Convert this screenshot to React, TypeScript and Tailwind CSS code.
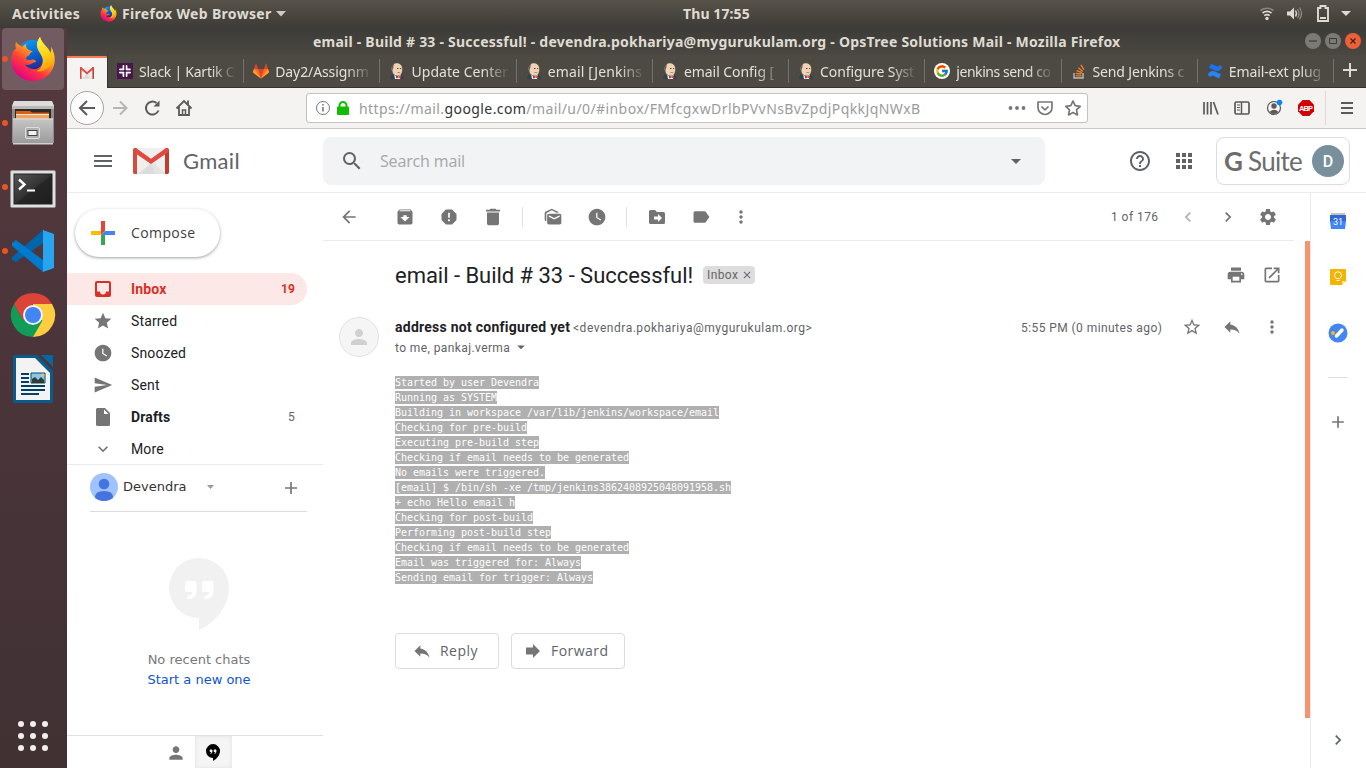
import React from "react";
import {
  MdArchive, MdReport, MdDelete, MdMarkAsUnread, MdWatchLater, MdLabel, MdMoreVert, MdSettings, MdPrint,
  MdOpenInNew, MdStarBorder, MdReply, MdHelpOutline, MdApps, MdMenu, MdSearch, MdArrowBack, MdChevronLeft,
  MdChevronRight, MdStar, MdSend, MdExpandMore, MdPerson, MdAdd, MdArrowDropDown, MdClose,
} from "react-icons/md";
import { FcGoogle } from "react-icons/fc";

const Firefox = ({ size, id }: { size: number; id: string }) => (
  <svg width={size} height={size} viewBox="0 0 44 46" className="shrink-0">
    <defs>
      <linearGradient id={id + "a"} x1="0.8" y1="0.1" x2="0.25" y2="0.95">
        <stop offset="0" stopColor="#ffe226" />
        <stop offset="0.35" stopColor="#ffa21a" />
        <stop offset="0.65" stopColor="#ff3b3b" />
        <stop offset="1" stopColor="#e50086" />
      </linearGradient>
      <linearGradient id={id + "b"} x1="0.3" y1="0" x2="0.6" y2="1">
        <stop offset="0" stopColor="#0a9bf5" />
        <stop offset="0.55" stopColor="#0a56c8" />
        <stop offset="1" stopColor="#2b1478" />
      </linearGradient>
      <linearGradient id={id + "c"} x1="0.3" y1="0" x2="0.5" y2="1">
        <stop offset="0" stopColor="#fff44f" />
        <stop offset="0.5" stopColor="#ffd317" />
        <stop offset="1" stopColor="#ff9a0d" />
      </linearGradient>
    </defs>
    <circle cx="22" cy="21" r="17" fill={`url(#${id}b)`} />
    <path d="M5 6c-1 3-.6 5 0 6.500C1 16 .300 20 .300 24c0 12 9.500 21 21.700 21s21.700-9.500 21.700-21.500c0-4-1-8-3-11 .3 3 0 4.500-.7 6C38 12 31 8 29 1c-3 4-4 9-1 14 3 4 5 7 3.500 12-1.500 4.500-5.500 6.500-9.500 6-4-.3-6.500-2-8-4.500 3 .8 5 .3 7-1 1.500-1 3-.8 4-1.400.2-1.700-1.500-3-4-2.600-2 .5-4 1.200-6-.5 0-2 1.500-3 3-3.500.8-1 .6-2.500 4-4.500-2 0-4-.4-6-2.500-.9-1.200-1.200-3-.6-4.700-1.400.5-3 1.500-4 3C9 9.500 6.500 8.500 5 6z" fill={`url(#${id}a)`} />
    <path d="M29 1c-3.500 4.500-4 9-1.500 13.500C30 19 33 22 31.500 28c-1 4-3.500 6-6 7.500 8 1 15-4.500 16.500-13 .6-5-.3-9-1.600-12 .2 3-.2 5-.9 6.500C37.500 10.500 30.500 8 29 1z" fill={`url(#${id}c)`} />
  </svg>
);

const GmailLogo = ({ w, h }: { w: number; h: number }) => (
  <svg width={w} height={h} viewBox="0 0 36 26" className="shrink-0" preserveAspectRatio="none">
    <path d="M3 0h30v26H3z" fill="#efefef" />
    <path d="M18 12L33 26H10z" fill="#e0e0e0" opacity=".7" />
    <path d="M4 26l14-10 4 10z" fill="#d9d9d9" opacity=".7" />
    <path d="M0 2.200C0 1 .9 0 2.200 0L4 .4V26H1.800C.8 26 0 25.200 0 24.200z" fill="#d54b3d" />
    <path d="M36 2.200C36 1 35.100 0 33.800 0L32 .4V26h2.200c1 0 1.800-.8 1.800-1.800z" fill="#c33a2e" />
    <path d="M.3 1.300C.6.400 1.300 0 2.200 0c.6 0 1 .1 1.500.5L18 10.800 32.300.5c.5-.4.9-.5 1.500-.5.900 0 1.600.4 1.900 1.300.5 1.500.1 2.600-.9 3.300L18 16 1.200 4.600C.2 3.900-.1 2.800.3 1.300z" fill="#e04b3f" />
  </svg>
);

const Jenkins = () => (
  <svg width="16" height="16" viewBox="0 0 16 16" className="shrink-0">
    <path d="M1 16c.3-3 1.500-5 4-5.500l6 .5c2.500.5 3.500 2.500 4 5z" fill="#2d4450" />
    <path d="M5 11l3 3 4-3-1 5H6z" fill="#f4f4f4" />
    <path d="M2.500 5.500c0-3.500 2.500-5.500 5.500-5.500s5.500 2.500 5.500 6c0 4-1.500 7-4.700 7S3.500 11 3 8z" fill="#efd3b4" />
    <path d="M3.200 9C1.800 7 2 2.500 5 .7 4.500 2.500 4.800 4 4 5.500z" fill="#6b655d" />
    <path d="M8 5h1.500v1H8zM11 5h1.200v1H11zM8 9.200c1 .7 2.500.7 3.500 0" fill="#5d4636" />
    <path d="M7 12.500l2.500 1.200 2.500-1.200v3l-2.500-1-2.500 1z" fill="#d33833" />
    <path d="M2.500 5.500c0-3.500 2.500-5.500 5.500-5.500s5.500 2.500 5.500 6c0 4-1.500 7-4.700 7S3.500 11 3 8" fill="none" stroke="#37322d" strokeWidth=".4" />
  </svg>
);

const SlackIcon = () => (
  <svg width="16" height="16" viewBox="0 0 16 16" className="shrink-0">
    <path d="M0 0h16v16H0z" fill="#4a154b" />
    <g stroke="#fff" strokeWidth="1.900" strokeLinecap="round">
      <path d="M6.500 2.900v3.600M9.500 9.500v3.600M12.900 6.500H9.500M6.500 9.500H2.900M3 6.500h3.500M9.500 9.500H13M9.500 3v3.500M6.500 9.500v3.600" />
    </g>
    <path d="M8 2v12M2 8h12" stroke="#4a154b" strokeWidth=".9" />
  </svg>
);

const GitLab = () => (
  <svg width="16" height="16" viewBox="0 0 16 16" className="shrink-0">
    <path d="M8 15.500L.4 9.800 0 9l1-3h14l1 3-.4.800z" fill="#fc6d26" />
    <path d="M8 15.500L5 6h6z" fill="#e24329" />
    <path d="M1 6L.1 8.800c-.1.400 0 .8.300 1L8 15.500zM15 6l.9 2.800c.1.400 0 .8-.3 1L8 15.500z" fill="#fca326" />
    <path d="M1 6h4L3.300.8c-.1-.3-.5-.3-.6 0zM15 6h-4L12.700.8c.1-.3.5-.3.6 0z" fill="#e24329" />
  </svg>
);

const StackOverflow = () => (
  <svg width="16" height="16" viewBox="0 0 16 16" className="shrink-0">
    <path d="M3 10v5h9v-5" fill="none" stroke="#bcbbbb" strokeWidth="1.400" />
    <path d="M4.700 12.900h5.800M4.800 10.400l5.700.6M5.600 7.700l5.300 2M7.300 4.800l4.500 3.600M9.900 1.800l3.100 4.800" stroke="#f48024" strokeWidth="1.300" />
  </svg>
);

const Confluence = () => (
  <svg width="16" height="16" viewBox="0 0 16 16" className="shrink-0">
    <path d="M.6 12C2.700 8.500 4.500 7 8 8.500l6 2.800-2 4.200-5.500-2.700c-1.300-.6-2-.2-2.800 1.200z" fill="#2684ff" />
    <path d="M15.400 4C13.300 7.500 11.500 9 8 7.500L2 4.700 4 .5l5.500 2.700c1.300.6 2 .2 2.800-1.200z" fill="#1f72ee" />
  </svg>
);

const tabs: [string, React.ReactNode, string][] = [
  ["Slack | Kartik C", <SlackIcon />, "tracking-[-0.25px]"],
  ["Day2/Assignm", <GitLab />, "tracking-[-0.1px]"],
  ["Update Center", <Jenkins />, "tracking-[0.05px]"],
  ["email [Jenkins", <Jenkins />, "tracking-[0.15px]"],
  ["email Config [", <Jenkins />, "tracking-[-0.05px]"],
  ["Configure Syst", <Jenkins />, "tracking-[-0.1px]"],
  ["jenkins send co", <span className="flex size-4 shrink-0 items-center justify-center rounded-full bg-white"><FcGoogle size={14} /></span>, "tracking-[-0.45px]"],
  ["Send Jenkins c", <StackOverflow />, "tracking-[-0.15px]"],
  ["Email-ext plug", <Confluence />, "tracking-[-0.1px]"],
];

const TopBar = () => (
  <div className="flex h-7 shrink-0 items-center bg-gradient-to-b from-[#57534a] to-[#3d3b36] pb-px font-['Noto_Sans',sans-serif] text-[14px] font-bold text-[#dfdbd2]">
    <span className="ml-3 w-[88px] whitespace-nowrap tracking-[0.3px]">Activities</span>
    <Firefox size={17} id="fs" />
    <span className="ml-[5px] w-[150px] whitespace-nowrap tracking-[0.33px]">Firefox Web Browser</span>
    <svg width="10" height="6" className="ml-[4px]"><path d="M0 0h10L5 5.500z" fill="#cfcbc3" /></svg>
    <span className="ml-[397px] w-[70px] whitespace-nowrap tracking-[0.1px]">Thu 17:55</span>
    <svg width="100" height="20" viewBox="0 0 100 20" className="ml-[506px]">
      <g fill="none" strokeWidth="1.600">
        <path d="M1.500 6.500q6.500-4.500 13 0" stroke="#8a877f" />
        <path d="M3.500 9q4.500-3.300 9 0M5.300 11.600q2.700-2 5.400 0" stroke="#dfdbd2" />
      </g>
      <circle cx="8" cy="14.500" r="1.700" fill="#dfdbd2" />
      <path d="M28 7.500h3l4-4v12l-4-4h-3z" fill="#dfdbd2" />
      <path d="M36.500 6.500q2 3 0 6" stroke="#dfdbd2" fill="none" strokeWidth="1.300" />
      <path d="M38.500 5q3 4.500 0 9M40.500 3.500q4 6 0 12" stroke="#918e86" fill="none" strokeWidth="1.200" />
      <path d="M59 4h2.500V2h5v2H69v13H59z" fill="none" stroke="#dfdbd2" strokeWidth="1.900" />
      <path d="M61 13h6v2h-6z" fill="#dfdbd2" />
      <path d="M82 7h10l-5 5z" fill="#dfdbd2" />
    </svg>
  </div>
);

const dockCell = "flex h-16 shrink-0 items-center";
const Dot = ({ on }: { on?: boolean }) => (
  <span className={on ? "ml-[2px] size-[6px] shrink-0 rounded-full bg-[#e95420]" : "ml-[2px] size-[6px] shrink-0"} />
);

const Dock = () => (
  <div className="flex w-[67px] shrink-0 flex-col bg-gradient-to-b from-[#55393e] via-[#49343a] to-[#403133]">
    <div className="mr-[3px] ml-[2px] flex h-[62px] shrink-0 items-center rounded-[4px] bg-[#735c61]">
      <span className="size-[6px] shrink-0 rounded-full bg-[#e95420]" />
      <span className="ml-[2px]"><Firefox size={46} id="fb" /></span>
    </div>
    <div className={dockCell + " mt-px"}>
      <Dot on />
      <svg width="44" height="46" viewBox="0 0 44 46" className="ml-[3px]">
        <defs>
          <linearGradient id="cab" x1="0" y1="0" x2="0" y2="1"><stop offset="0" stopColor="#c6c6c6" /><stop offset="1" stopColor="#9a9a9a" /></linearGradient>
        </defs>
        <path d="M3 1h38l2 5v37H1V6z" fill="#8c8c8c" />
        <path d="M3 1h38l2 5H1z" fill="#dcdcdc" />
        <path d="M1 6h42v3H1z" fill="#b9b9b9" />
        <path d="M4 9h36v10H4z" fill="#2d2a28" />
        <path d="M5 11h14l2 1.500h17V19H5z" fill="#d85f15" />
        <path d="M5 14h33v1.500H5z" fill="#fbe6cf" />
        <path d="M5 16h33v3H5z" fill="#f2a55a" />
        <path d="M2 18.500h40V44H2z" fill="url(#cab)" />
        <path d="M2 18.500h40v1H2z" fill="#e0e0e0" />
        <path d="M2 43h40v1.500H2z" fill="#cfcfcf" />
        <rect x="14.500" y="27.500" width="14" height="11" rx="1.500" fill="#b0b0b0" stroke="#dedede" />
        <rect x="17" y="30.500" width="9" height="5" fill="#f2f2f2" stroke="#444" />
      </svg>
    </div>
    <div className={dockCell}>
      <Dot on />
      <svg width="46" height="40" viewBox="0 0 46 40" className="mt-1 ml-[2px]">
        <defs><linearGradient id="term" x1="0" y1="0" x2="1" y2="1"><stop offset="0" stopColor="#555" /><stop offset=".5" stopColor="#333" /><stop offset=".52" stopColor="#262626" /><stop offset="1" stopColor="#1d1d1d" /></linearGradient></defs>
        <rect x=".5" y="1.500" width="45" height="37" rx="1.500" fill="#e0e0e0" stroke="#929292" />
        <rect x="4" y="5" width="38" height="30" fill="url(#term)" stroke="#222" />
        <path d="M9 10.500l5.500 5L9 20.500" fill="none" stroke="#fff" strokeWidth="2.400" />
        <path d="M17 21.500h8" stroke="#fff" strokeWidth="2" />
      </svg>
    </div>
    <div className={dockCell}>
      <Dot on />
      <svg width="44" height="44" viewBox="0 0 44 44" className="ml-[3px]">
        <path d="M32 1L1 28v3l4 2L32 14z" fill="#0065a9" />
        <path d="M5 11l-4 3v3l31 26V31z" fill="#007acc" />
        <path d="M32 1l11 4v34l-11 4z" fill="#27a5ee" />
      </svg>
    </div>
    <div className={dockCell}>
      <Dot />
      <svg width="46" height="46" viewBox="0 0 46 46" className="ml-[2px]">
        <path d="M23 12H42.100A22 22 0 0 1 23 45z" fill="#ffcd40" />
        <path d="M23 23L13.500 28.500 3.900 12A22 22 0 0 0 23 45L32.500 28.500z" fill="#0f9d58" />
        <path d="M23 12H42.100A22 22 0 0 0 3.900 12l9.600 16.500z" fill="#db4437" />
        <circle cx="23" cy="23" r="10" fill="#f1f1f1" />
        <circle cx="23" cy="23" r="8" fill="#4285f4" />
      </svg>
    </div>
    <div className={dockCell}>
      <Dot />
      <svg width="40" height="48" viewBox="0 0 40 48" className="ml-[5px]">
        <path d="M2 0h22l16 16v30a2 2 0 0 1-2 2H2a2 2 0 0 1-2-2V2a2 2 0 0 1 2-2z" fill="#0a5a8c" />
        <path d="M28 0h11a1 1 0 0 1 1 1v11z" fill="#0369a3" />
        <path d="M3 3h19l15 15v27H3z" fill="#f3f3f3" />
        <path d="M8 19h8M8 23h8M8 27h8M8 31h24M8 35h24M8 39h18" stroke="#004165" strokeWidth="1.800" />
        <path d="M18 18h14v10H18z" fill="#87c7ea" stroke="#0a4a70" />
        <path d="M19 28v-4l3-2 3 3 3-3 3 3v3z" fill="#333a32" />
        <circle cx="30" cy="20" r="1.500" fill="#f3c64a" />
      </svg>
    </div>
    <svg width="67" height="40" viewBox="0 0 67 40" className="mt-auto mb-3 shrink-0">
      {[8, 20, 32].map((y) => [21, 33, 45].map((x) => <circle key={x + "-" + y} cx={x} cy={y} r="3" fill="#f2f0ef" />))}
    </svg>
  </div>
);

const TitleBar = () => (
  <div className="flex h-[27px] shrink-0 items-center bg-gradient-to-b from-[#3c3b37] to-[#4b4842] pb-px font-['Noto_Sans',sans-serif] text-[14px] font-bold text-[#dfdbd2]">
    <span className="ml-[246px] w-[807px] whitespace-nowrap tracking-[0.23px]">email - Build # 33 - Successful! - devendra.pokhariya@mygurukulam.org - OpsTree Solutions Mail - Mozilla Firefox</span>
    <svg width="60" height="18" viewBox="0 0 60 18" className="ml-[184px]">
      <circle cx="9" cy="9" r="8" fill="#7c7a74" /><path d="M5 9h8" stroke="#3c3b37" strokeWidth="1.200" />
      <circle cx="29" cy="9" r="8" fill="#7c7a74" /><path d="M25.500 6.500h7v5h-7z" stroke="#3c3b37" fill="none" />
      <circle cx="49" cy="9" r="8" fill="#ea6039" /><path d="M46.500 6.500l5 5m0-5l-5 5" stroke="#4a2114" strokeWidth="1.300" />
    </svg>
  </div>
);

const TabStrip = () => (
  <div className="flex h-[33px] shrink-0 bg-[#4d4a43] font-['Noto_Sans',sans-serif] text-[14px] text-[#e3e0d8]">
    <div className="mt-px flex w-10 shrink-0 items-center justify-center border-t-2 border-[#f37b55] bg-[#f5f4f2]"><GmailLogo w={14} h={12} /></div>
    <div className="flex min-w-0 flex-1 border-b border-l border-[#35332f]">
      {tabs.map(([label, icon, tr]) => (
        <div key={label} className="flex h-full min-w-0 flex-1 items-center">
          <span className="ml-[9px] flex shrink-0">{icon}</span>
          <span className={"mr-1 ml-[6px] min-w-0 flex-1 whitespace-nowrap [mask-image:linear-gradient(to_right,black_72%,transparent_98%)] " + tr}>{label}</span>
          <span className="h-6 w-px bg-[#75726b]" />
        </div>
      ))}
      <div className="flex w-8 shrink-0 items-center justify-center">
        <svg width="14" height="14" className="mb-[2px]"><path d="M7 0v14M0 7h14" stroke="#dedbd3" strokeWidth="2" /></svg>
      </div>
    </div>
  </div>
);

const NavBar = () => (
  <div className="flex h-[41px] shrink-0 items-center border-b border-[#cbc8c4] bg-[#f4f3f1]">
    <svg width="140" height="40" viewBox="0 0 140 40" fill="none" stroke="#5a5a5a" strokeWidth="2">
      <circle cx="20" cy="20" r="16.500" fill="#fcfcfc" stroke="#a6a4a1" strokeWidth="1" />
      <path d="M28 20H13m7-7l-7 7 7 7" />
      <path d="M46 20h14m-7-6.500l6.500 6.500-6.500 6.500" stroke="#b6b5b3" />
      <path d="M91.500 22.500a6.500 6.500 0 1 1-2-7.500" /><path d="M92.500 12.500v6h-6z" fill="#5a5a5a" stroke="none" />
      <path d="M109.500 20.500l7.500-7.500 7.500 7.500M112 19v8h10v-8M121 12.500v5" strokeWidth="1.800" />
      <path d="M115.500 27v-5h3v5" strokeWidth="1.500" />
    </svg>
    <div className="ml-[99px] flex h-[30px] w-[782px] shrink-0 items-center rounded-[3px] border border-[#c3c1be] bg-white font-['Noto_Sans',sans-serif] text-[14px] text-[#9b9b9b]">
      <svg width="52" height="20" viewBox="0 0 52 20">
        <circle cx="16" cy="10" r="6.500" fill="none" stroke="#777" /><path d="M16 9v4.500M16 6v1.600" stroke="#777" strokeWidth="1.600" />
        <path d="M32.500 9V7.500a3.500 3.500 0 0 1 7 0V9" fill="none" stroke="#12bc00" strokeWidth="2" /><rect x="30" y="8.500" width="12" height="8.500" rx="1" fill="#12bc00" />
      </svg>
      <span className="w-[640px] whitespace-nowrap tracking-[0.41px]">https://mail.<span className="text-[#333]">google.com</span>/mail/u/0/#inbox/FMfcgxwDrlbPVvNsBvZpdjPqkkJqNWxB</span>
      <svg width="80" height="20" viewBox="0 0 80 20" className="ml-[8px] shrink-0" fill="none" stroke="#777" strokeWidth="1.700">
        <g fill="#777" stroke="none"><circle cx="3.500" cy="10" r="1.900" /><circle cx="10" cy="10" r="1.900" /><circle cx="16.500" cy="10" r="1.900" /></g>
        <path d="M31 4h14v5.500a7 7 0 0 1-14 0z" strokeLinejoin="round" /><path d="M34.500 8.500l3.500 3.300 3.500-3.300" />
        <path d="M66 3l2.200 4.700 5 .6-3.700 3.500 1 5.100L66 14.400l-4.500 2.500 1-5.100-3.700-3.500 5-.6z" strokeLinejoin="round" />
      </svg>
    </div>
    <svg width="170" height="40" viewBox="0 0 170 40" className="ml-[108px] shrink-0" fill="none" stroke="#5a5a5a" strokeWidth="1.700">
      <path d="M8 14v12.500M11.500 14v12.500M15 14v12.500M17.500 14l4.500 12.500" />
      <rect x="39" y="14" width="14" height="12" rx="1.500" /><path d="M45.500 14v12" strokeWidth="1.500" /><path d="M41 17h3M41 19.500h3M41 22h3" strokeWidth="1" />
      <circle cx="78" cy="20" r="6.500" strokeWidth="1.200" /><circle cx="78" cy="18" r="2.700" fill="#5a5a5a" stroke="none" /><path d="M73.500 24q4.500-4.500 9 0-4.500 4-9 0z" fill="#5a5a5a" stroke="none" />
      <circle cx="83.500" cy="14.500" r="2.800" fill="#0a84ff" stroke="none" />
      <path d="M106.700 12h6.600l4.700 4.700v6.600l-4.700 4.700h-6.600l-4.700-4.700v-6.600z" fill="#d00000" stroke="none" />
      <text x="103" y="22.800" fontSize="7.500" fontWeight="bold" fill="#fff" stroke="none" fontFamily="Liberation Sans, sans-serif" textLength="14">ABP</text>
      <path d="M129.500 3v34" stroke="#dedcd9" strokeWidth="1" />
      <path d="M145 15h12M145 20h12M145 25h12" strokeWidth="1.900" />
    </svg>
  </div>
);

const MailHeader = () => (
  <div className="flex h-16 shrink-0 items-center border-b border-[#ebebeb] text-[#5f6368]">
    <MdMenu size={24} className="ml-6" />
    <span className="ml-[18px]"><GmailLogo w={36} h={26} /></span>
    <span className="ml-[14px] w-[140px] font-['Lato',sans-serif] text-[22px]/[24px] tracking-[0.3px]">Gmail</span>
    <div className="flex h-12 w-[722px] shrink-0 items-center rounded-lg bg-[#f1f3f4]">
      <MdSearch size={24} className="ml-[17px]" />
      <span className="ml-4 flex-1 font-['Open_Sans',sans-serif] text-[16px] tracking-[-0.15px] text-[#a4a7aa]">Search mail</span>
      <MdArrowDropDown size={24} className="mr-[17px]" />
    </div>
    <MdHelpOutline size={24} className="ml-[83px]" />
    <MdApps size={24} className="ml-5" />
    <div className="ml-5 flex h-12 w-[134px] items-center rounded-lg border border-[#dadce0] pl-[7px] font-['Lato',sans-serif] text-[#6d6d6d]">
      <span className="flex w-[88px] pt-0.5 text-[26px] whitespace-nowrap"><b className="w-6">G</b><span className="tracking-[-0.7px]">Suite</span></span>
      <span className="flex size-8 shrink-0 items-center justify-center rounded-full bg-[#78909c] pt-0.5 font-['Roboto',sans-serif] text-[16px] font-medium text-white">D</span>
    </div>
  </div>
);

const InboxIcon = () => (
  <svg width="20" height="20" viewBox="0 0 20 20">
    <path fillRule="evenodd" d="M4 2h12a2 2 0 0 1 2 2v12a2 2 0 0 1-2 2H4a2 2 0 0 1-2-2V4c0-1.100.9-2 2-2zm0 2v8.500h3a3 3 0 0 0 6 0h3V4z" fill="#d93025" />
  </svg>
);
const FileIcon = () => (
  <svg width="20" height="20" viewBox="0 0 20 20"><path fillRule="evenodd" d="M4.500 1H12l5 5v11.500a1.500 1.500 0 0 1-1.500 1.500h-11A1.500 1.500 0 0 1 3 17.500v-15A1.500 1.500 0 0 1 4.500 1zM11 2.500V7h4.500z" fill="#757575" /></svg>
);

const navItems: [string, React.ReactNode, string, string][] = [
  ["Inbox", <InboxIcon />, "19", "bg-[#fce8e6] text-[#d93025] font-bold"],
  ["Starred", <MdStar size={20} color="#757575" />, "", "text-[#202124]"],
  ["Snoozed", <MdWatchLater size={20} color="#757575" />, "", "text-[#202124]"],
  ["Sent", <MdSend size={20} color="#757575" />, "", "text-[#202124]"],
  ["Drafts", <FileIcon />, "5", "text-[#202124] font-bold"],
  ["More", <MdExpandMore size={20} color="#757575" />, "", "text-[#202124]"],
];

const Hangouts = ({ w, h, fill, quote }: { w: number; h: number; fill: string; quote: string }) => (
  <svg width={w} height={h} viewBox="0 0 60 72">
    <path d="M30 0a30 30 0 0 0 0 60v12C46 65 60 48 60 30A30 30 0 0 0 30 0z" fill={fill} />
    <path d="M18 23h7.500q2 0 2 2v8q0 8-9 8.500v-3.500q4.500-.5 4.700-4H18q-2 0-2-2v-7q0-2 2-2zM35 23h7.500q2 0 2 2v8q0 8-9 8.500v-3.500q4.500-.5 4.700-4H35q-2 0-2-2v-7q0-2 2-2z" fill={quote} />
  </svg>
);

const Sidebar = () => (
  <div className="flex w-64 shrink-0 flex-col">
    <div className="mt-4 ml-2 flex h-12 w-[145px] shrink-0 items-center rounded-full shadow-[0_1px_2px_0_rgba(60,64,67,0.302),0_1px_3px_1px_rgba(60,64,67,0.149)]">
      <svg width="24" height="24" viewBox="0 0 24 24" className="ml-4">
        <path d="M10 0h4v10l-4 4z" fill="#ea4335" /><path d="M10 14h4v10h-4z" fill="#34a853" /><path d="M0 10h10v4H0z" fill="#fbbc04" /><path d="M14 10h10v4H10z" fill="#4285f4" />
      </svg>
      <span className="ml-4 pb-px font-['Open_Sans',sans-serif] text-[14px] font-medium tracking-[0.4px] text-[#3c4043]">Compose</span>
    </div>
    <div className="mt-4 shrink-0 font-['Roboto',sans-serif] text-[14px] tracking-[0.15px]">
      {navItems.map(([label, icon, count, cls]) => (
        <div key={label} className={"flex h-8 w-60 items-center rounded-r-full " + cls}>
          <span className="ml-[26px] w-[38px]">{icon}</span>
          <span className="flex-1">{label}</span>
          <span className={label === "Drafts" ? "mr-3 text-[12px] font-normal text-[#5f6368]" : "mr-3 text-[12px]"}>{count}</span>
        </div>
      ))}
    </div>
    <div className="-mt-px h-px shrink-0 bg-[#e8eaed]" />
    <div className="mr-4 ml-[23px] flex h-[47px] shrink-0 items-center border-b border-[#dcdcdc] pb-[2px] font-['DejaVu_Sans',sans-serif] text-[13px] text-[#333]">
      <svg width="28" height="28" viewBox="0 0 28 28"><defs><clipPath id="av"><circle cx="14" cy="14" r="14" /></clipPath></defs><circle cx="14" cy="14" r="14" fill="#a0c3ff" /><g clipPath="url(#av)" fill="#4374e0"><circle cx="14" cy="11" r="5.300" /><path d="M5 28v-4q0-6 9-6t9 6v4z" /></g></svg>
      <span className="ml-[5px] w-[84px]">Devendra</span>
      <svg width="7" height="5"><path d="M0 0h7L3.500 4z" fill="#999" /></svg>
      <svg width="12" height="12" className="mt-[2px] ml-[71px]"><path d="M6 0v12M0 6h12" stroke="#777" strokeWidth="1.700" /></svg>
    </div>
    <div className="mt-[46px] ml-[102px] h-[72px]"><Hangouts w={60} h={72} fill="#f1f1f1" quote="#ffffff" /></div>
    <div className="mt-5 pl-2 text-center font-['DejaVu_Sans',sans-serif] text-[13px]/[20px] text-[#777]">
      <div>No recent chats</div>
      <div className="text-[#1155cc]">Start a new one</div>
    </div>
    <div className="mt-auto flex h-[33px] border-t border-[#e0e0e0] pl-[91px]">
      <span className="flex w-[37px] items-center justify-center pt-0.5 pr-0.5"><MdPerson size={20} color="#757575" /></span>
      <span className="flex w-[37px] items-center justify-center bg-[#f5f5f5] pt-px pr-0.5 shadow-[inset_0_0_5px_#e2e2e2]"><Hangouts w={14} h={17} fill="#000000" quote="#f5f5f5" /></span>
    </div>
  </div>
);

const Cell = ({ children }: { children: React.ReactNode }) => <span className="flex w-11 justify-center">{children}</span>;

const Toolbar = () => (
  <div className="mr-4 flex h-12 shrink-0 items-center border-b border-[#ebebeb] pl-1 text-[#757575]">
    <Cell><MdArrowBack size={20} /></Cell>
    <span className="w-3" />
    <Cell><MdArchive size={20} /></Cell>
    <Cell><MdReport size={20} /></Cell>
    <Cell><MdDelete size={20} className="scale-x-[1.2] scale-y-110" /></Cell>
    <span className="mx-[7px] h-5 w-px bg-[#e4e4e4]" />
    <span className="w-px" />
    <Cell><MdMarkAsUnread size={20} /></Cell>
    <Cell><MdWatchLater size={20} /></Cell>
    <span className="mx-[7px] h-5 w-px bg-[#e4e4e4]" />
    <span className="w-px" />
    <Cell>
      <svg width="20" height="20" viewBox="0 0 20 20"><path fillRule="evenodd" d="M3.500 3H8l2 2h6.500A1.500 1.500 0 0 1 18 6.500v9a1.500 1.500 0 0 1-1.500 1.500h-13A1.500 1.500 0 0 1 2 15.500v-11A1.500 1.500 0 0 1 3.500 3zM7 9.500v3h4V15l4-4-4-4v2.500z" fill="#757575" /></svg>
    </Cell>
    <Cell><MdLabel size={20} /></Cell>
    <span className="flex w-9 justify-center"><MdMoreVert size={20} /></span>
    <span className="ml-[352px] w-[67px] font-['Roboto',sans-serif] text-[12px] tracking-[0.45px] whitespace-nowrap text-[#5f6368]">1 of 176</span>
    <MdChevronLeft size={20} color="#b0b0b0" />
    <MdChevronRight size={20} className="ml-5" />
    <MdSettings size={20} className="ml-5" />
  </div>
);

const log = [
  "Started by user Devendra", "Running as SYSTEM", "Building in workspace /var/lib/jenkins/workspace/email",
  "Checking for pre-build", "Executing pre-build step", "Checking if email needs to be generated",
  "No emails were triggered.", "[email] $ /bin/sh -xe /tmp/jenkins3862408925048091958.sh", "+ echo Hello email h",
  "Checking for post-build", "Performing post-build step", "Checking if email needs to be generated",
  "Email was triggered for: Always", "Sending email for trigger: Always",
];

const Message = () => (
  <div className="flex flex-1 flex-col font-['Roboto',sans-serif] text-[#5f6368]">
    <div className="mt-[18px] flex h-8 items-center pl-[72px] text-[#757575]">
      <span className="w-[308px] text-[22px] tracking-[-0.03px] whitespace-nowrap text-[#202124]">email - Build # 33 - Successful!</span>
      <span className="flex h-[18px] w-[52px] items-center rounded-[4px] bg-[#ddd] pl-1 text-[12px] tracking-[0.4px] text-[#666]">Inbox<MdClose size={12} className="ml-[3px]" /></span>
      <MdPrint size={20} className="ml-[471px]" />
      <MdOpenInNew size={20} className="ml-4" />
    </div>
    <div className="mt-[26px] flex h-10 pl-4">
      <span className="flex size-10 shrink-0 items-center justify-center rounded-full border border-[#e2e2e2] bg-[#f5f5f5]"><MdPerson size={24} color="#d0d0d0" /></span>
      <div className="ml-4 w-[626px] text-[12px]/[20px] whitespace-nowrap">
        <div className="flex h-[21px]"><b className="w-[178px] text-[14px] tracking-[0.26px] text-[#202124]">address not configured yet</b><span className="pt-px tracking-[0.52px]">&lt;devendra.pokhariya@mygurukulam.org&gt;</span></div>
        <div className="flex items-center tracking-[0.4px]"><span className="w-[118px]">to me, pankaj.verma</span><MdArrowDropDown size={18} className="mt-[-2px] ml-[-1px]" /></div>
      </div>
      <span className="w-[161px] pt-px text-[12px]/[20px] tracking-[0.43px] whitespace-nowrap">5:55 PM (0 minutes ago)</span>
      <MdStarBorder size={20} color="#757575" />
      <MdReply size={20} color="#757575" className="ml-5" />
      <MdMoreVert size={20} color="#757575" className="ml-5" />
    </div>
    <div className="mt-[19px] ml-[72px] font-['DejaVu_Sans_Mono',monospace] text-[10px]/[13px] tracking-[-0.02px] text-white">
      {log.map((l, i) => <div key={i} className="mb-[2px] h-[13px] w-fit bg-[#b0b0b0] whitespace-pre">{l}</div>)}
    </div>
    <div className="mt-[47px] ml-[72px] flex gap-3 font-['Open_Sans',sans-serif] text-[14px] font-medium tracking-[0.45px]">
      <span className="flex h-9 w-[104px] items-center rounded-[4px] border border-[#dadce0] pl-4"><MdReply size={20} color="#757575" /><span className="ml-2 pb-px">Reply</span></span>
      <span className="flex h-9 w-[114px] items-center rounded-[4px] border border-[#dadce0] pl-[14px]"><svg width="14" height="14"><path d="M0 3.500h7V0l7 7-7 7v-3.500H0z" fill="#757575" /></svg><span className="ml-[11px] pb-px">Forward</span></span>
    </div>
  </div>
);

const SidePanel = () => (
  <div className="flex w-14 shrink-0 flex-col items-center border-l border-[#ebebeb] pr-px">
    <svg width="18" height="18" viewBox="0 0 18 18" className="mt-[19px] shrink-0">
      <path d="M2 1h14v3H2z" fill="#c3c3c3" /><path d="M1 3h16v7H1z" fill="#3367d6" /><path d="M1 9l1 8h14l1-8z" fill="#4285f4" />
      <text x="4" y="13" fontSize="9" fill="#fff" fontFamily="Roboto, sans-serif">31</text>
    </svg>
    <svg width="16" height="16" viewBox="0 0 16 16" className="mt-[39px] shrink-0">
      <path d="M1 0h14a1 1 0 0 1 1 1v11l-4 4H1a1 1 0 0 1-1-1V1a1 1 0 0 1 1-1z" fill="#f5b400" /><path d="M16 12h-4v4z" fill="#fde293" />
      <path d="M6.500 9.500q-2-1.200-2-3.200a3.500 3.500 0 0 1 7 0q0 2-2 3.200zM6.500 11.500h3" fill="none" stroke="#fff" />
    </svg>
    <svg width="20" height="20" viewBox="0 0 20 20" className="mt-[38px] shrink-0">
      <circle cx="10" cy="10" r="9.500" fill="#4285f4" /><path d="M8.500 13l5.500-6" stroke="#fff" strokeWidth="3.500" strokeLinecap="round" /><circle cx="5" cy="10" r="2" fill="#fbbc04" />
    </svg>
    <div className="mt-[34px] h-px w-5 shrink-0 bg-[#dadce0]" />
    <MdAdd size={20} color="#757575" className="mt-[34px] shrink-0" />
    <MdChevronRight size={20} color="#5f6368" className="mt-auto mb-[18px]" />
  </div>
);

export default function App() {
  return (
    <div className="flex h-[768px] w-[1366px] flex-col overflow-hidden bg-white">
      <TopBar />
      <div className="flex min-h-0 flex-1">
        <Dock />
        <div className="flex min-w-0 flex-1 flex-col">
          <TitleBar />
          <TabStrip />
          <NavBar />
          <MailHeader />
          <div className="flex min-h-0 flex-1">
            <Sidebar />
            <div className="flex min-w-0 flex-1 flex-col">
              <Toolbar />
              <div className="flex flex-1">
                <Message />
                <div className="h-[477px] w-[5px] shrink-0 bg-[#f7936f]" />
              </div>
            </div>
            <SidePanel />
          </div>
        </div>
      </div>
    </div>
  );
}
